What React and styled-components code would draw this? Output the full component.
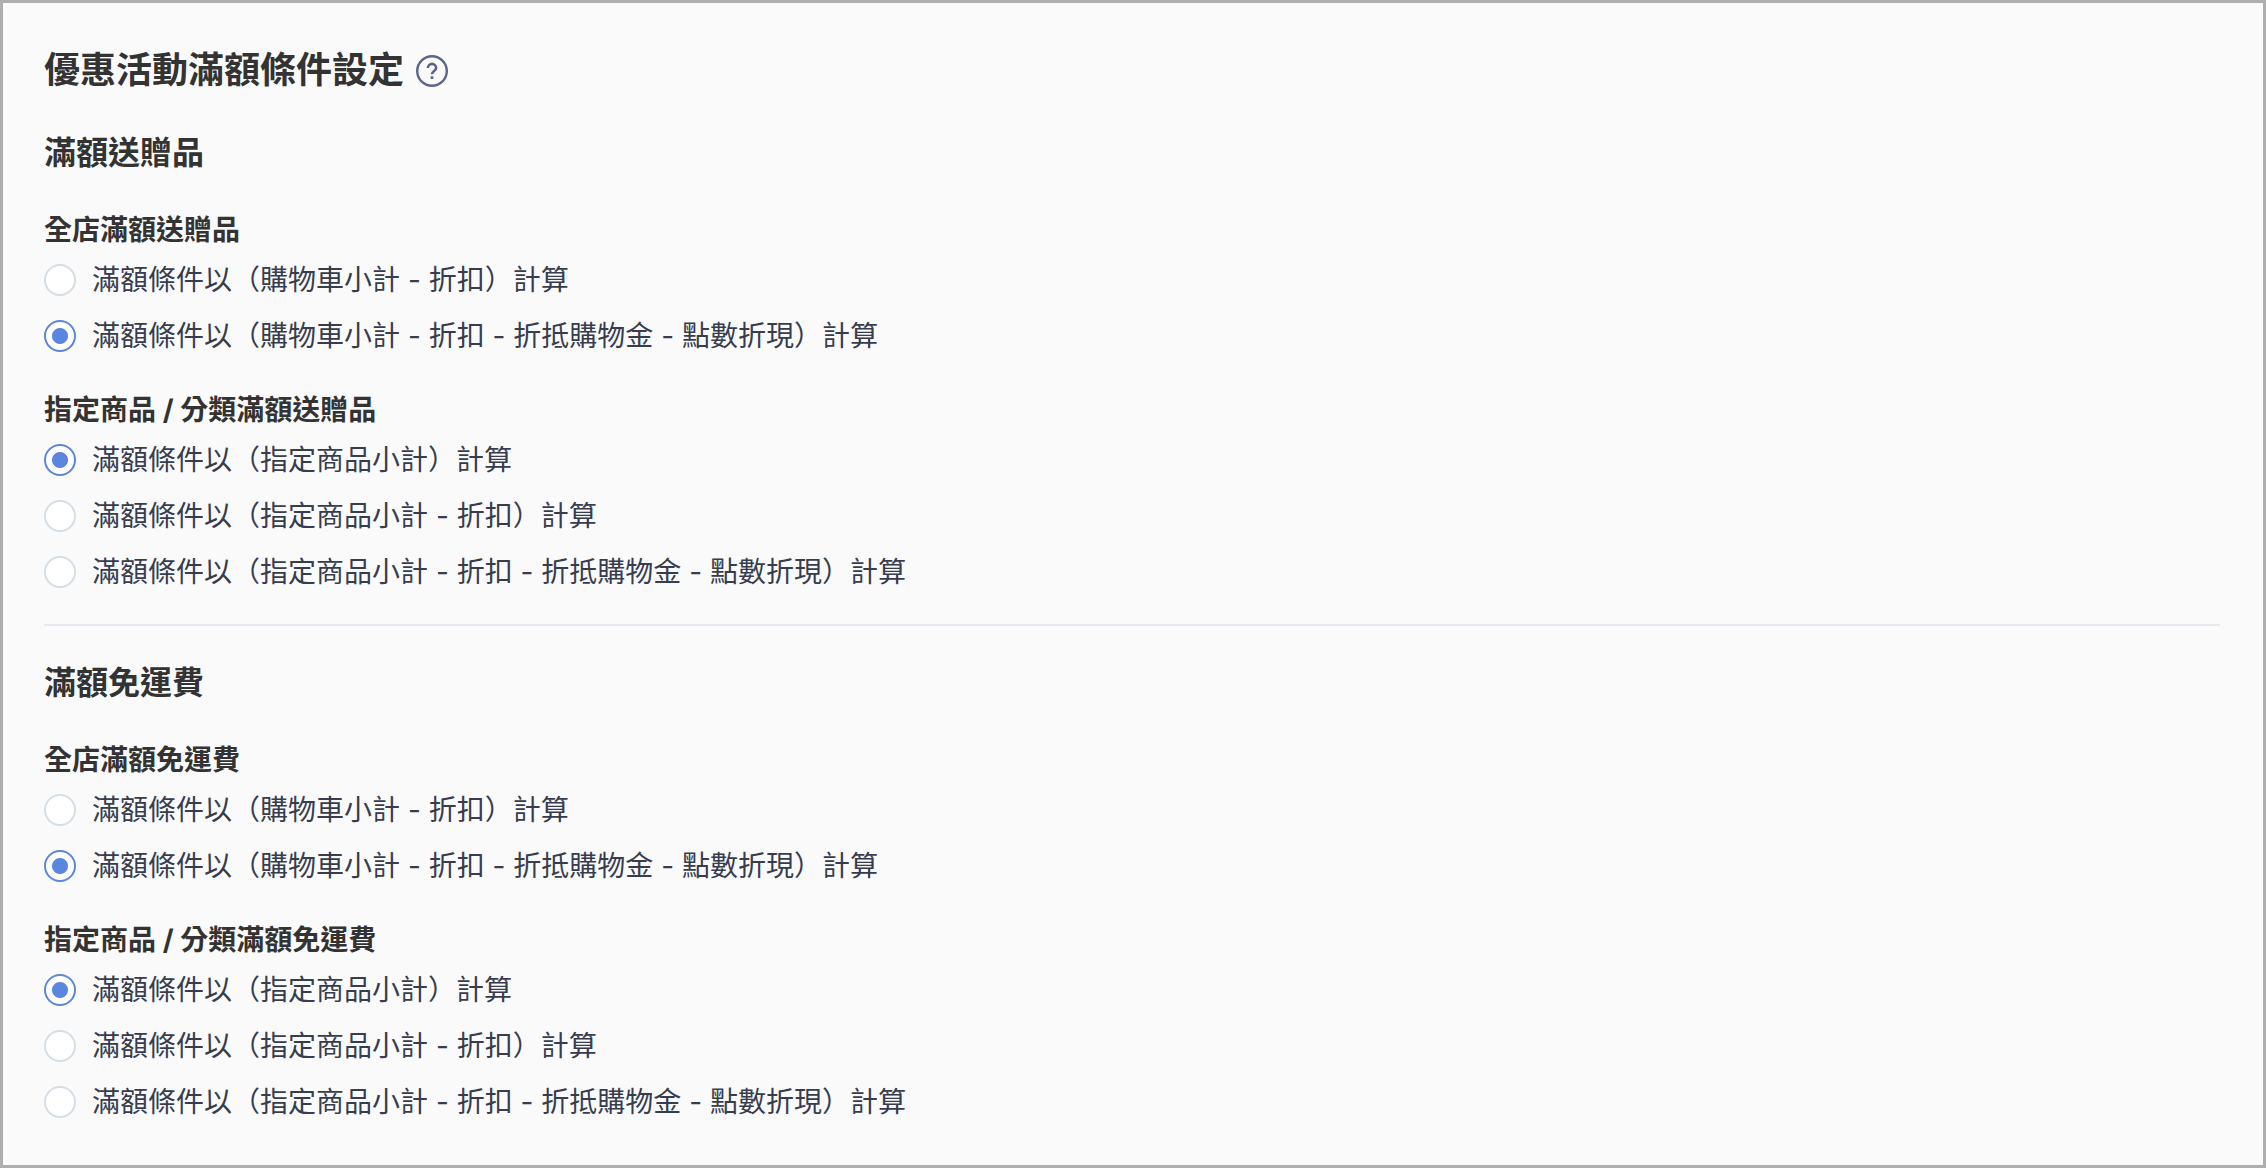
import React from 'react';
import styled, { createGlobalStyle } from 'styled-components';

const GlobalStyle = createGlobalStyle`
  *, *::before, *::after { box-sizing: border-box; }
  body {
    margin: 0;
    background: #fafafa;
    color: #333;
    font-family: Inter, "Noto Sans CJK TC", sans-serif;
  }
`;

const Panel = styled.main`
  min-height: 100vh;
  padding: 41px 43px 40px 41px;
  border: 3px solid #aeaeae;
  background: #fafafa;
`;

const Header = styled.header`
  display: flex;
  align-items: center;
  gap: 12px;
  margin-bottom: 34px;
`;

const Title = styled.h1`
  margin: 0;
  font-size: 36px;
  line-height: 53px;
  font-weight: 700;
`;

const HelpButton = styled.button`
  display: flex;
  padding: 0;
  border: 0;
  background: none;
  color: #5a648c;
  cursor: pointer;
`;

const Section = styled.section`
  & + & {
    margin-top: 32px;
    padding-top: 35px;
    border-top: 2px solid #e4e9ef;
  }
`;

const SectionTitle = styled.h2`
  margin: 0 0 35px;
  font-size: 32px;
  line-height: 44px;
  font-weight: 700;
`;

const Group = styled.fieldset`
  display: flex;
  flex-direction: column;
  min-width: 0;
  margin: 0;
  padding: 0;
  border: 0;

  & + & { margin-top: 34px; }
`;

const GroupTitle = styled.legend`
  margin-bottom: 10px;
  padding: 0;
  font-size: 28px;
  line-height: 40px;
  font-weight: 700;
`;

const Options = styled.div`
  display: flex;
  flex-direction: column;
  align-items: flex-start;
  gap: 16px;
`;

const Option = styled.label`
  display: flex;
  align-items: center;
  gap: 16px;
  font-size: 28px;
  line-height: 40px;
  color: #373d4f;
  cursor: pointer;
`;

const Radio = styled.input`
  appearance: none;
  flex: none;
  width: 32px;
  height: 32px;
  margin: 0;
  border: 2px solid #d5dee6;
  border-radius: 50%;
  background: #fff;
  cursor: pointer;

  &:checked {
    border-color: #5b86e0;
    background: radial-gradient(circle, #5b86e0 0 7.5px, #fff 8.5px);
  }
`;

const cartOptions = [
  '滿額條件以（購物車小計 - 折扣）計算',
  '滿額條件以（購物車小計 - 折扣 - 折抵購物金 - 點數折現）計算',
];

const productOptions = [
  '滿額條件以（指定商品小計）計算',
  '滿額條件以（指定商品小計 - 折扣）計算',
  '滿額條件以（指定商品小計 - 折扣 - 折抵購物金 - 點數折現）計算',
];

const sections = [
  {
    id: 'gift',
    title: '滿額送贈品',
    groups: [
      { id: 'store', title: '全店滿額送贈品', options: cartOptions, selected: 1 },
      { id: 'product', title: '指定商品 / 分類滿額送贈品', options: productOptions, selected: 0 },
    ],
  },
  {
    id: 'shipping',
    title: '滿額免運費',
    groups: [
      { id: 'store', title: '全店滿額免運費', options: cartOptions, selected: 1 },
      { id: 'product', title: '指定商品 / 分類滿額免運費', options: productOptions, selected: 0 },
    ],
  },
];

function HelpIcon() {
  return (
    <svg width="32" height="32" viewBox="0 0 32 32" fill="none" stroke="currentColor" aria-hidden="true">
      <circle cx="16" cy="16" r="14.8" strokeWidth="2.4" />
      <path d="M11.9 13a4.1 4.1 0 0 1 8.2 0c0 2.9-4.1 3.1-4.1 6.2" strokeWidth="2.6" />
      <rect x="14.6" y="21.2" width="2.8" height="2.8" rx="0.6" fill="currentColor" stroke="none" />
    </svg>
  );
}

export default function App() {
  return (
    <>
      <GlobalStyle />
      <Panel lang="zh-Hant">
        <Header>
          <Title>優惠活動滿額條件設定</Title>
          <HelpButton type="button" aria-label="說明">
            <HelpIcon />
          </HelpButton>
        </Header>
        {sections.map((section) => (
          <Section key={section.id}>
            <SectionTitle>{section.title}</SectionTitle>
            {section.groups.map((group) => (
              <Group key={group.id}>
                <GroupTitle>{group.title}</GroupTitle>
                <Options>
                  {group.options.map((text, i) => (
                    <Option key={text}>
                      <Radio
                        type="radio"
                        name={`${section.id}-${group.id}`}
                        value={i}
                        defaultChecked={i === group.selected}
                      />
                      {text}
                    </Option>
                  ))}
                </Options>
              </Group>
            ))}
          </Section>
        ))}
      </Panel>
    </>
  );
}
